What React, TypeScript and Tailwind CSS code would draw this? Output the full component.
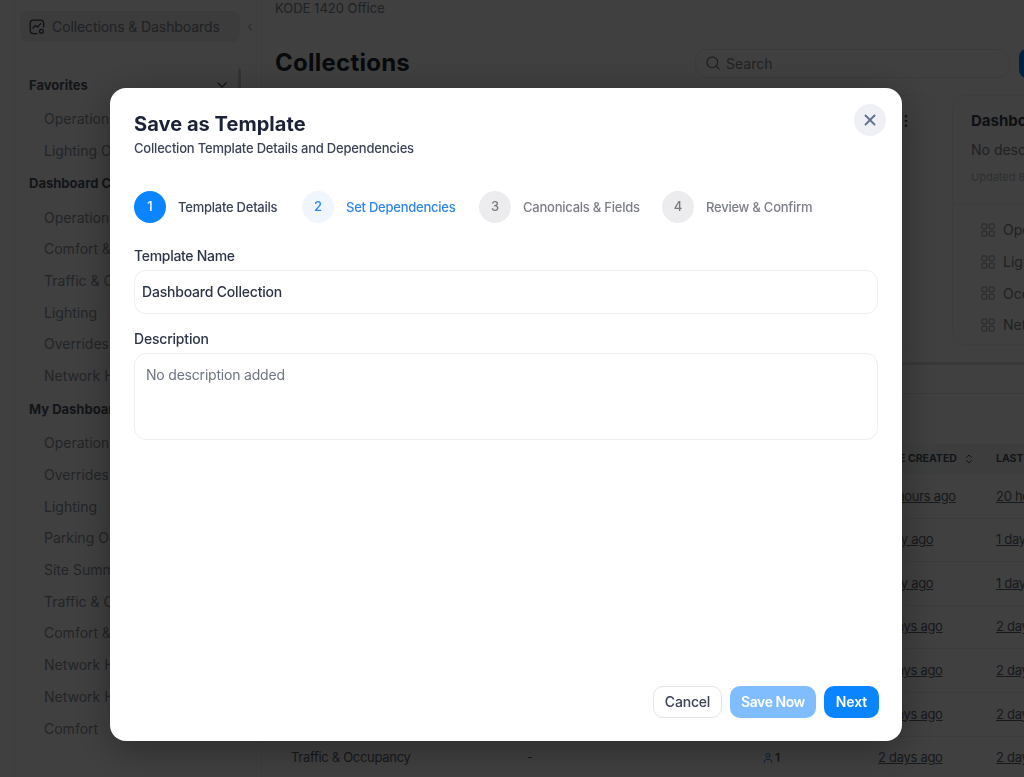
import React from "react";
import { ChevronDown, ChevronLeft, ChevronsUpDown, MoreVertical, Search, User, X } from "lucide-react";

const font = { fontFamily: '"Inter", "Noto Sans", "Liberation Sans", sans-serif' };

type Group = { title: string; items: string[] };
const groups: Group[] = [
  { title: "Favorites", items: ["Operations Overview", "Lighting Overview"] },
  { title: "Dashboard Collection", items: ["Operations Overview", "Comfort & Air", "Traffic & Occupancy", "Lighting", "Overrides", "Network Health"] },
  { title: "My Dashboards", items: ["Operations Overview", "Overrides", "Lighting", "Parking Occupancy", "Site Summary", "Traffic & Occupancy", "Comfort & Air", "Network Health", "Network Health 2", "Comfort"] },
];

const rows = [
  ["Operations Overview", "20 hours ago", "20 hours ago"],
  ["Lighting Overview", "1 day ago", "1 day ago"],
  ["Occupancy", "1 day ago", "1 day ago"],
  ["Network Health", "2 days ago", "2 days ago"],
  ["Comfort & Air", "2 days ago", "2 days ago"],
  ["Overrides", "2 days ago", "2 days ago"],
  ["Traffic & Occupancy", "2 days ago", "2 days ago"],
];

const steps = [
  { n: "1", label: "Template Details", width: "w-[100px]", circle: "bg-[#0a84ff] text-white", text: "text-[#3a4256]" },
  { n: "2", label: "Set Dependencies", width: "w-[109px]", circle: "bg-[#f0f6fd] text-[#2f86ea]", text: "text-[#2f86ea]" },
  { n: "3", label: "Canonicals & Fields", width: "w-[115px]", circle: "bg-[#ececee] text-[#77797f]", text: "text-[#7b7e86]" },
  { n: "4", label: "Review & Confirm", width: "w-[106px]", circle: "bg-[#ececee] text-[#77797f]", text: "text-[#7b7e86]" },
];

function GridIcon() {
  return (
    <svg width="14" height="14" viewBox="0 0 14 14" fill="none" stroke="#a8adb6" strokeWidth="1.2">
      <rect x="0.8" y="0.8" width="5" height="5" rx="1.4" />
      <rect x="8.2" y="0.8" width="5" height="5" rx="1.4" />
      <rect x="0.8" y="8.2" width="5" height="5" rx="1.4" />
      <rect x="8.2" y="8.2" width="5" height="5" rx="1.4" />
    </svg>
  );
}

function CollectionsIcon() {
  return (
    <svg width="16" height="16" viewBox="0 0 16 16" fill="none" stroke="#374151" strokeWidth="1.3" strokeLinecap="round" strokeLinejoin="round">
      <path d="M8 14.6H4.2A3 3 0 0 1 1.2 11.6V4.2a3 3 0 0 1 3-3h7.4a3 3 0 0 1 3 3V8" />
      <path d="M4 9l2.4-2.6 2 1.6L11.6 4.8" />
      <circle cx="12.4" cy="12.2" r="1.9" />
    </svg>
  );
}

function Background() {
  return (
    <div className="flex h-[777px] w-[1024px] overflow-hidden bg-white">
      <aside className="relative ml-[14px] w-[248px] shrink-0 border-x border-[#f1f2f4] pl-[5px] pt-[11px]">
        <div className="flex h-[31px] w-[220px] items-center gap-[7px] rounded-lg bg-[#eff0f1] pl-[9px] text-[14px] tracking-[-0.1px] text-[#7b828e]">
          <CollectionsIcon />
          <span>Collections &amp; Dashboards</span>
        </div>
        <ChevronLeft className="absolute left-[229px] top-[21px] h-3 w-3 text-[#7b828e]" />
        <div className="absolute left-[223px] top-[68px] h-[60px] w-[3px] rounded bg-[#c9ccd1]" />
        <div className="mt-[25px] flex w-[210px] flex-col pl-[9px]">
          {groups.map((g) => (
            <div key={g.title} className="flex flex-col">
              <div className="flex h-[35.5px] items-center justify-between whitespace-nowrap pt-[1px] text-[13px] font-bold text-[#4b5563]">
                <span>{g.title}</span>
                <ChevronDown className="h-4 w-4 text-[#4b5563]" />
              </div>
              {g.items.map((it, i) => (
                <div key={i} className="flex h-[31.7px] items-center whitespace-nowrap pl-[15px] text-[14px] text-[#8a909c]">{it}</div>
              ))}
            </div>
          ))}
        </div>
      </aside>
      <main className="min-w-0 flex-1 pl-[13px]">
        <div className="h-[17px] whitespace-nowrap text-[13px] leading-[17px] text-[#7b828e]">KODE 1420 Office</div>
        <div className="mt-[30px] flex h-[32px] items-center">
          <h1 className="w-[420px] shrink-0 text-[24px] font-bold tracking-[0.25px] text-[#1f2937]">Collections</h1>
          <div className="flex h-[29px] w-[315px] shrink-0 items-center gap-[5px] rounded-xl border border-[#e5e7eb] pl-[9px] text-[14px] text-[#7b828e]">
            <Search className="h-[16px] w-[16px]" />
            <span>Search</span>
          </div>
          <div className="ml-[9px] h-[29px] w-[60px] shrink-0 rounded-lg bg-[#0a84ff]" />
        </div>
        <div className="mt-[16px] flex h-[250px] w-[960px] gap-[17px]">
          <div className="relative w-[660px] shrink-0 rounded-xl border border-[#f3f4f6]">
            <MoreVertical className="absolute right-[20px] top-[17px] h-4 w-4 text-[#4b5563]" />
          </div>
          <div className="w-[280px] shrink-0 rounded-xl border border-[#f3f4f6] pl-[18px] pt-[14px]">
            <div className="whitespace-nowrap text-[15px] font-bold text-[#374151]">Dashboard Collection</div>
            <div className="mt-[6px] whitespace-nowrap text-[14px] text-[#7b828e]">No description added</div>
            <div className="mt-[9px] whitespace-nowrap text-[11px] text-[#b8bcc4]">Updated 8 hours ago</div>
            <div className="-ml-[18px] mt-[19px] border-t border-[#f3f4f6]" />
            <div className="mt-[9px] flex flex-col">
              {["Operations", "Lighting", "Occupancy", "Network"].map((t) => (
                <div key={t} className="flex h-[31.7px] items-center gap-[8px] pl-[10px] text-[14px] text-[#7b828e]">
                  <GridIcon />
                  <span>{t}</span>
                </div>
              ))}
            </div>
          </div>
        </div>
        <div className="mt-[17px] h-[3px] bg-[#dfe1e5]" />
        <div className="h-[29px] border-b border-[#e5e7ea]" />
        <div className="h-[50px]" />
        <div className="grid h-[30px] w-[960px] grid-cols-[236px_235px_116px_118px_100px] items-center whitespace-nowrap bg-[#f3f4f6] pl-[16px] text-[10.5px] font-bold text-[#4b5563]">
          <span>NAME</span>
          <span>DESCRIPTION</span>
          <span>SHARED</span>
          <span className="flex items-center gap-[6px]">DATE CREATED <ChevronsUpDown className="h-3 w-3" /></span>
          <span>LAST</span>
        </div>
        <div className="h-[1px]" />
        {rows.map((r, i) => (
          <div key={i} className="grid h-[43.6px] w-[960px] grid-cols-[236px_235px_116px_118px_100px] items-center whitespace-nowrap border-b border-[#eceef0] pl-[16px] text-[13px] tracking-[-0.3px] text-[#5b6470]">
            <span>{r[0]}</span>
            <span>-</span>
            <span className="flex items-center gap-[1px] text-[12px] font-semibold"><User className="h-3 w-3 text-[#2f86ea]" />1</span>
            <span className="underline">{r[1]}</span>
            <span className="underline">{r[2]}</span>
          </div>
        ))}
      </main>
    </div>
  );
}

export default function App() {
  return (
    <div className="relative h-[777px] w-[1024px] overflow-hidden" style={font}>
      <Background />
      <div className="absolute inset-0 bg-black/75 pl-[110px] pt-[88px] backdrop-blur-[0.6px]">
        <div className="flex h-[653px] w-[792px] flex-col rounded-2xl bg-white p-[24px] shadow-[0_8px_40px_rgba(0,0,0,0.35)]">
          <div className="flex items-start justify-between">
            <div>
              <h2 className="text-[20px] leading-[24px] font-bold tracking-[0.05px] text-[#1b2238]">Save as Template</h2>
              <p className="mt-[3px] text-[13px] leading-[18px] font-medium tracking-[-0.2px] text-[#3a4256]">Collection Template Details and Dependencies</p>
            </div>
            <button className="-mr-[8px] -mt-[8px] flex h-[32px] w-[32px] items-center justify-center rounded-full bg-[#eef0f6] text-[#5f6f92]">
              <X className="h-[18px] w-[18px]" strokeWidth={2.4} />
            </button>
          </div>
          <div className="mt-[34px] flex items-center gap-[24px]">
            {steps.map((s) => (
              <div key={s.n} className="flex items-center gap-[12px]">
                <div className={`flex h-[32px] w-[32px] items-center justify-center rounded-full text-[13px] font-medium ${s.circle}`}>{s.n}</div>
                <span className={`whitespace-nowrap pt-[1px] text-[13px] font-medium tracking-[-0.24px] ${s.width} ${s.text}`}>{s.label}</span>
              </div>
            ))}
          </div>
          <label className="mt-[24px] text-[14px] leading-[18px] font-medium tracking-[-0.3px] text-[#2c3448]">Template Name</label>
          <div className="mt-[5px] flex h-[44px] items-center rounded-xl border border-[#eceef2] pb-[1px] pl-[7px] text-[14px] font-medium tracking-[-0.2px] text-[#2c3448]">Dashboard Collection</div>
          <label className="mt-[16px] text-[14px] leading-[18px] font-medium tracking-[-0.2px] text-[#2c3448]">Description</label>
          <div className="mt-[5px] h-[87px] rounded-xl border border-[#eceef2] pl-[11px] pt-[12px] text-[14px] leading-[18px] tracking-[-0.2px] text-[#6f7583]">No description added</div>
          <div className="-mr-[1px] mt-auto -mb-[1px] flex justify-end gap-[8px]">
            <button className="h-[32px] w-[69px] rounded-[10px] border border-[#e6e4e2] bg-white pb-[2px] text-[14px] font-medium tracking-[-0.2px] text-[#3a4256]">Cancel</button>
            <button className="h-[32px] w-[86px] rounded-[10px] bg-[#7fbdff] pb-[2px] text-[14px] font-semibold tracking-[-0.45px] text-white">Save Now</button>
            <button className="h-[32px] w-[55px] rounded-[10px] bg-[#0a84ff] pb-[2px] text-[14px] font-semibold tracking-[-0.1px] text-white">Next</button>
          </div>
        </div>
      </div>
    </div>
  );
}
